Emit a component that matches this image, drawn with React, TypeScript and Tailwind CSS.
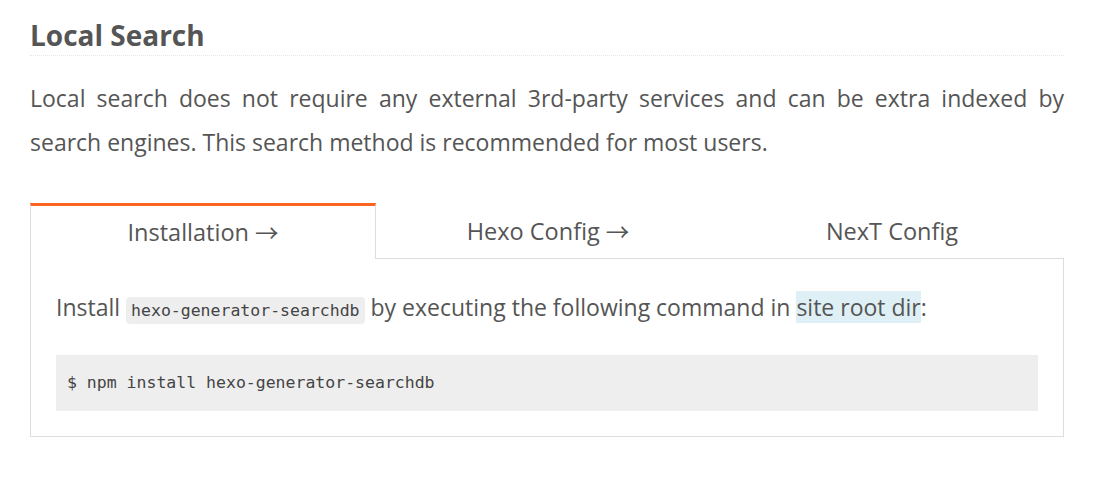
const tabs = ["Installation", "Hexo Config", "NexT Config"];

const Arrow = () => (
  <span className="font-['Noto_Sans_CJK_SC',sans-serif] ml-[6px]">→</span>
);

export default function App() {
  return (
    <div className="min-h-screen bg-white text-[#555] font-['Open_Sans','Noto_Sans',sans-serif]">
      <div className="ml-[30px] w-[1034px]">
        <h2 className="pt-[15px] text-[28px] font-bold leading-[40px] border-b border-dotted border-[#e6e6e6]">
          Local Search
        </h2>
        <p className="mt-[20px] text-[23px] leading-[44px] text-justify">
          Local search does not require any external 3rd-party services and can be extra indexed by
          search engines. This search method is recommended for most users.
        </p>

        <div className="mt-[39px]">
          <ul className="flex">
            {tabs.map((t, i) => (
              <li
                key={t}
                className={
                  i === 0
                    ? "flex-1 h-[56px] flex items-center justify-center text-[23.5px] border-t-[3px] border-t-[#fc6423] border-x border-x-[#ddd]"
                    : "flex-1 h-[56px] flex items-center justify-center text-[23.5px] border-b border-[#ddd] pt-[3px]"
                }
              >
                {t}
                {i < 2 && <Arrow />}
              </li>
            ))}
          </ul>
          <div className="border-x border-b border-[#ddd] px-[25px] pt-[26px] pb-[25px]">
            <p className="text-[23px] leading-[44px]">
              Install{" "}
              <code className="font-['DejaVu_Sans_Mono',monospace] text-[16.5px] text-[#444] bg-[#eee] rounded-[4px] px-[5px] py-[4px]">
                hexo-generator-searchdb
              </code>{" "}
              by executing the following command in{" "}
              <span className="bg-[#def0f6]">site root dir</span>:
            </p>
            <pre className="mt-[22px] bg-[#eee] px-[11px] py-[17px] font-['DejaVu_Sans_Mono',monospace] text-[16.5px] leading-[22px] text-[#444]">
              $ npm install hexo-generator-searchdb
            </pre>
          </div>
        </div>
      </div>
    </div>
  );
}
